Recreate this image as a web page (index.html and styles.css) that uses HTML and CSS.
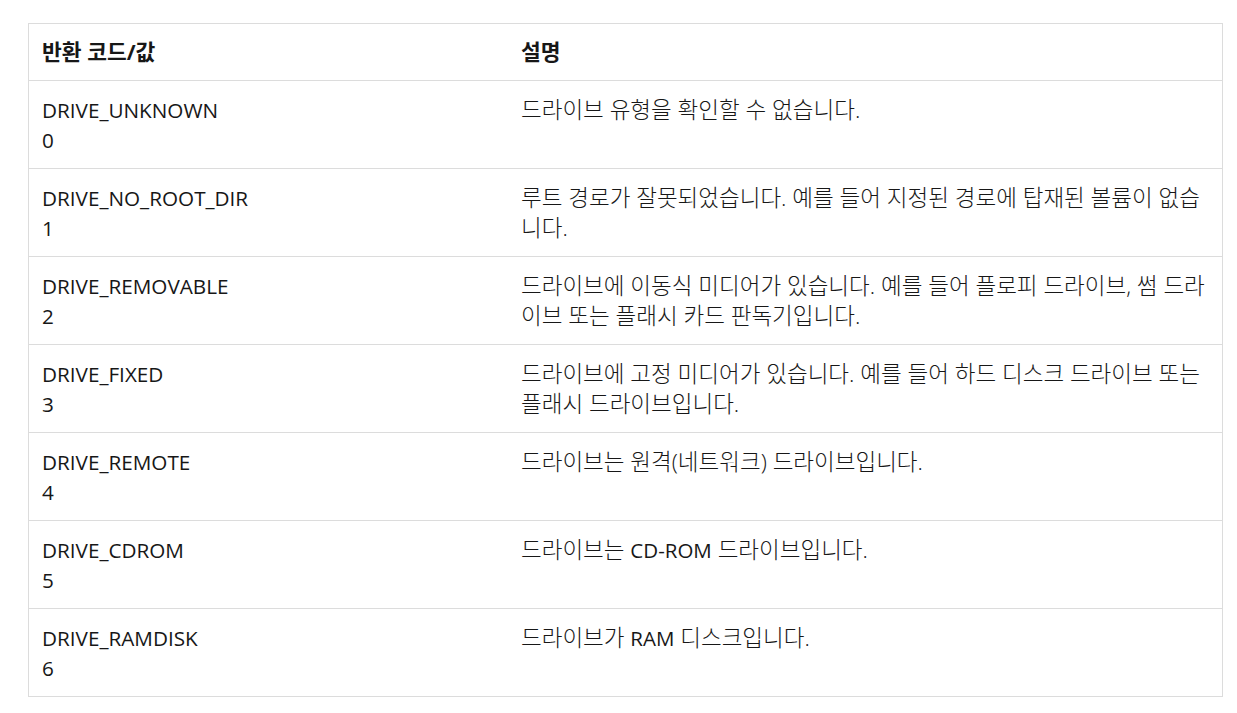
FILE: index.html
```html
<!DOCTYPE html>
<html lang="ko">
<head>
<meta charset="utf-8">
<title>반환 코드/값</title>
<link rel="stylesheet" href="styles.css">
</head>
<body>
<div class="wrap">
<table class="codes">
<thead>
<tr><th class="c1">반환 코드/값</th><th class="c2">설명</th></tr>
</thead>
<tbody>
<tr><td class="code"><div>DRIVE_UNKNOWN</div><div>0</div></td><td class="desc">드라이브 유형을 확인할 수 없습니다.</td></tr>
<tr><td class="code"><div>DRIVE_NO_ROOT_DIR</div><div>1</div></td><td class="desc">루트 경로가 잘못되었습니다. 예를 들어 지정된 경로에 탑재된 볼륨이 없습니다.</td></tr>
<tr><td class="code"><div>DRIVE_REMOVABLE</div><div>2</div></td><td class="desc">드라이브에 이동식 미디어가 있습니다. 예를 들어 플로피 드라이브, 썸 드라이브 또는 플래시 카드 판독기입니다.</td></tr>
<tr><td class="code"><div>DRIVE_FIXED</div><div>3</div></td><td class="desc">드라이브에 고정 미디어가 있습니다. 예를 들어 하드 디스크 드라이브 또는 플래시 드라이브입니다.</td></tr>
<tr><td class="code"><div>DRIVE_REMOTE</div><div>4</div></td><td class="desc">드라이브는 원격(네트워크) 드라이브입니다.</td></tr>
<tr><td class="code"><div>DRIVE_CDROM</div><div>5</div></td><td class="desc">드라이브는 <span class="lat">CD-ROM</span> 드라이브입니다.</td></tr>
<tr><td class="code"><div>DRIVE_RAMDISK</div><div>6</div></td><td class="desc">드라이브가 <span class="lat">RAM</span> 디스크입니다.</td></tr>
</tbody>
</table>
</div>
</body>
</html>
```
FILE: styles.css
```css
html, body {
  margin: 0;
  padding: 0;
  background: #ffffff;
}
.wrap {
  padding: 23px 0 0 28px;
}
.codes {
  width: 1195px;
  border-collapse: collapse;
  table-layout: fixed;
  font-family: "Open Sans", "Noto Sans CJK KR", sans-serif;
  font-size: 22.5px;
  line-height: 30px;
  color: #171717;
  border: 1px solid #dcdcdc;
}
.codes th {
  text-align: left;
  font-weight: 700;
  padding: 13px 13px 13px 13px;
  border-bottom: 1px solid #dcdcdc;
  font-size: 21.5px;
}
.codes th.c1 { width: 453px; }
.codes td {
  vertical-align: top;
  padding: 14px 13px 13px 13px;
  border-bottom: 1px solid #dcdcdc;
}
.codes td.code {
  font-size: 20.7px;
}
.codes td.desc {
  font-weight: 300;
}
.codes .lat {
  font-size: 20.5px;
  font-weight: 400;
}
```
